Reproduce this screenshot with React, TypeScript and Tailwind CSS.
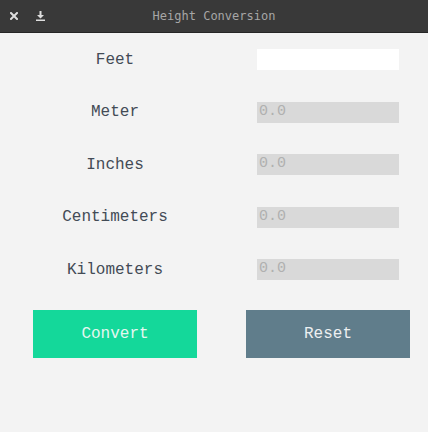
import { useState } from 'react';

const rows = ['Meter', 'Inches', 'Centimeters', 'Kilometers'];

function TitleBar() {
  return (
    <div className="relative flex h-[33px] items-center bg-[#393939] border-b border-[#262626]">
      <div className="flex items-center gap-[18px] pl-[10px]">
        {/* close */}
        <svg width="8" height="8" viewBox="0 0 8 8" className="text-[#dedede]">
          <path d="M1 1 L7 7 M7 1 L1 7" stroke="currentColor" strokeWidth="2" strokeLinecap="square" />
        </svg>
        {/* download */}
        <svg width="9" height="10" viewBox="0 0 9 10" className="text-[#dedede]">
          <path d="M3.5 0 H5.5 V4 H8 L4.5 7.5 L1 4 H3.5 Z" fill="currentColor" />
          <rect x="0" y="8.5" width="9" height="1.5" fill="currentColor" />
        </svg>
      </div>
      <div
        className="absolute inset-0 flex items-center justify-center text-[12px] text-[#a6a6a6]"
        style={{ fontFamily: '"DejaVu Sans Mono", monospace' }}
      >
        Height Conversion
      </div>
    </div>
  );
}

export default function App() {
  const [feet, setFeet] = useState('');

  return (
    <div
      className="h-[432px] w-[428px] bg-[#f3f3f3]"
      style={{ fontFamily: '"Liberation Mono", "Courier New", monospace' }}
    >
      <TitleBar />
      <div className="grid grid-cols-[164px_164px] gap-x-[49px] gap-y-[31.5px] pl-[33px] pr-[18px] pt-[16px]">
        <div className="flex h-[21px] items-center justify-center text-[16px] text-[#434b56]">Feet</div>
        <div className="flex h-[21px] justify-center">
          <input
            value={feet}
            onChange={(e) => setFeet(e.target.value)}
            className="h-[21px] w-[142px] bg-white px-[2px] text-[15px] outline-none"
          />
        </div>
        {rows.map((r) => (
          <div key={r} className="contents">
            <div className="flex h-[21px] items-center justify-center text-[16px] text-[#434b56]">{r}</div>
            <div className="flex h-[21px] justify-center">
              <input
                disabled
                placeholder="0.0"
                className="h-[21px] w-[142px] bg-[#d9d9d9] px-[2px] text-[15px] placeholder:text-[#b0b0b0] outline-none"
              />
            </div>
          </div>
        ))}
      </div>
      <div className="mt-[30px] flex gap-[49px] pl-[33px] pr-[18px]">
        <button className="h-[48px] w-[164px] shrink-0 bg-[#14d89a] text-[16px] text-[#e4f7f0]">Convert</button>
        <button className="h-[48px] w-[164px] shrink-0 bg-[#607d8b] text-[16px] text-[#eceff1]">Reset</button>
      </div>
    </div>
  );
}
